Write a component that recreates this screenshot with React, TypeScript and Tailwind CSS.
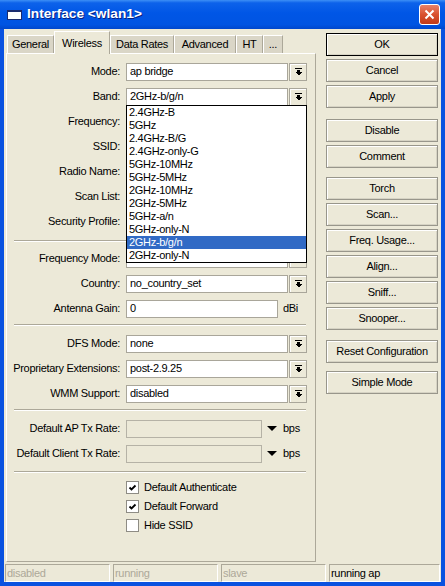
import React from "react";

const BANDS = [
  "2.4GHz-B",
  "5GHz",
  "2.4GHz-B/G",
  "2.4GHz-only-G",
  "5GHz-10MHz",
  "5GHz-5MHz",
  "2GHz-10MHz",
  "2GHz-5MHz",
  "5GHz-a/n",
  "5GHz-only-N",
  "2GHz-b/g/n",
  "2GHz-only-N",
];

const TABS = [
  { label: "General", w: "w-[47px]" },
  { label: "Wireless", w: "w-[56px]", active: true },
  { label: "Data Rates", w: "w-[64px]" },
  { label: "Advanced", w: "w-[62px]" },
  { label: "HT", w: "w-[27px]" },
  { label: "...", w: "w-[20px]" },
];

function DropBtn() {
  return (
    <div className="ml-[1px] flex h-[18px] w-[18px] items-center justify-center border border-[#a9a69a] bg-[#ece9d8] shadow-[inset_1px_1px_0_#fff]">
      <svg width="7" height="8" viewBox="0 0 7 8" shapeRendering="crispEdges">
        <rect x="0" y="0" width="7" height="1" fill="#000" />
        <polygon points="2,2 5,2 5,4 7,4 3.5,7.5 0,4 2,4" fill="#000" />
      </svg>
    </div>
  );
}

function Field({ value = "", className = "w-[162px]", disabled = false }: { value?: string; className?: string; disabled?: boolean }) {
  return (
    <div
      className={`flex h-[18px] items-center border pl-[3px] ${className} ${
        disabled ? "border-[#b5b2a6] bg-[#ece9d8]" : "border-[#a9a69a] bg-white"
      }`}
    >
      {value}
    </div>
  );
}

function Row({ label, children }: { label: string; children?: React.ReactNode }) {
  return (
    <div className="flex h-[25px] items-center">
      <div className="w-[113px] text-right whitespace-nowrap">{label}</div>
      <div className="ml-[6px] flex items-center">{children}</div>
    </div>
  );
}

function Sep({ className }: { className: string }) {
  return <div className={`ml-[7px] w-[292px] border-t border-b border-t-[#aca899] border-b-white ${className}`} />;
}

function Check({ label, checked }: { label: string; checked?: boolean }) {
  return (
    <div className="flex h-[19px] items-center pl-[119px]">
      <div className="flex h-[13px] w-[13px] items-center justify-center border border-[#8e8c84] bg-white">
        {checked && (
          <svg width="9" height="9" viewBox="0 0 9 9">
            <path d="M1.5 4.5 L3.5 6.5 L7.5 2.5" fill="none" stroke="#000" strokeWidth="1.8" />
          </svg>
        )}
      </div>
      <span className="ml-[5px]">{label}</span>
    </div>
  );
}

function Btn({ label, className = "", isDefault = false }: { label: string; className?: string; isDefault?: boolean }) {
  return (
    <div
      className={`flex h-[23px] w-[112px] items-center justify-center border bg-[#ece9d8] shadow-[inset_1px_1px_0_#fff,inset_-1px_-1px_0_#d6d3c4] ${
        isDefault ? "border-black" : "border-[#98968b]"
      } ${className}`}
    >
      {label}
    </div>
  );
}

function Triangle() {
  return (
    <svg width="10" height="6" viewBox="0 0 10 6" className="ml-[5px]">
      <polygon points="0,0 10,0 5,5" fill="#000" />
    </svg>
  );
}

export default function App() {
  return (
    <div className="flex h-[586px] w-[445px] flex-col bg-[#0a52e0] font-[family-name:Liberation_Sans,Arial,sans-serif] text-[11px] tracking-[-0.3px] text-black">
      {/* title bar */}
      <div className="flex h-[29px] shrink-0 items-center bg-[linear-gradient(180deg,#3d8ff6_0%,#0d62ea_10%,#0056e6_45%,#0054e2_85%,#0047cc_100%)] pl-[7px]">
        <div className="h-[10px] w-[15px] border border-t-2 border-[#1a2b6e] bg-white" />
        <span className="ml-[5px] text-[13.7px] font-bold tracking-normal text-white [text-shadow:1px_1px_0_#0a2080]">
          Interface &lt;wlan1&gt;
        </span>
        <div className="ml-auto mr-[5px] flex h-[21px] w-[21px] items-center justify-center rounded-[3px] border border-white bg-[linear-gradient(180deg,#e8826a_0%,#d9512f_50%,#c23a18_100%)]">
          <svg width="11" height="11" viewBox="0 0 11 11">
            <path d="M1.5 1.5 L9.5 9.5 M9.5 1.5 L1.5 9.5" stroke="#fff" strokeWidth="2" />
          </svg>
        </div>
      </div>

      {/* body */}
      <div className="mx-[4px] flex h-[553px] flex-col bg-[#ece9d8]">
        <div className="flex h-[533px]">
          {/* left: tabs + panel */}
          <div className="ml-[2px] flex w-[310px] flex-col">
            <div className="flex h-[24px] items-end pl-[1px]">
              {TABS.map((t) =>
                t.active ? (
                  <div
                    key={t.label}
                    className={`relative z-10 -mb-px flex h-[23px] ${t.w} items-start justify-center border-t border-l border-r border-t-white border-l-white border-r-[#aca899] bg-[#ece9d8] pt-[3px]`}
                  >
                    {t.label}
                  </div>
                ) : (
                  <div
                    key={t.label}
                    className={`flex h-[18px] ${t.w} items-center justify-center border-t border-l border-r border-t-white border-l-white border-r-[#aca899] bg-[#dad6c7]`}
                  >
                    {t.label}
                  </div>
                )
              )}
            </div>
            <div className="flex h-[509px] flex-col border border-t-white border-l-white border-r-[#aca899] border-b-[#aca899] pt-[5px]">
              <Row label="Mode:">
                <Field value="ap bridge" />
                <DropBtn />
              </Row>
              <Row label="Band:">
                <div className="relative flex items-center">
                  <Field value="2GHz-b/g/n" />
                  <DropBtn />
                  <div className="absolute top-[17px] left-0 z-20 flex w-[181px] flex-col border border-black bg-white">
                    {BANDS.map((b) => (
                      <div
                        key={b}
                        className={`flex h-[13px] items-center pl-[2px] ${b === "2GHz-b/g/n" ? "bg-[#316ac5] text-white" : ""}`}
                      >
                        {b}
                      </div>
                    ))}
                  </div>
                </div>
              </Row>
              <Row label="Frequency:">
                <Field />
                <DropBtn />
              </Row>
              <Row label="SSID:">
                <Field className="w-[181px]" />
              </Row>
              <Row label="Radio Name:">
                <Field className="w-[181px]" />
              </Row>
              <Row label="Scan List:">
                <Field />
                <DropBtn />
              </Row>
              <Row label="Security Profile:">
                <Field />
                <DropBtn />
              </Row>

              <Sep className="mt-[6px] mb-[4px]" />

              <Row label="Frequency Mode:">
                <Field />
                <DropBtn />
              </Row>
              <Row label="Country:">
                <Field value="no_country_set" />
                <DropBtn />
              </Row>
              <Row label="Antenna Gain:">
                <Field value="0" className="w-[152px]" />
                <span className="ml-[5px]">dBi</span>
              </Row>

              <Sep className="mt-[3px] mb-[5px]" />

              <Row label="DFS Mode:">
                <Field value="none" />
                <DropBtn />
              </Row>
              <Row label="Proprietary Extensions:">
                <Field value="post-2.9.25" />
                <DropBtn />
              </Row>
              <Row label="WMM Support:">
                <Field value="disabled" />
                <DropBtn />
              </Row>

              <Sep className="mt-[3px] mb-[5px]" />

              <Row label="Default AP Tx Rate:">
                <Field disabled className="w-[136px]" />
                <Triangle />
                <span className="ml-[6px]">bps</span>
              </Row>
              <Row label="Default Client Tx Rate:">
                <Field disabled className="w-[136px]" />
                <Triangle />
                <span className="ml-[6px]">bps</span>
              </Row>

              <Sep className="mt-[5px] mb-[5px]" />

              <Check label="Default Authenticate" checked />
              <Check label="Default Forward" checked />
              <Check label="Hide SSID" />
            </div>
          </div>

          {/* right: buttons */}
          <div className="ml-[10px] flex flex-col gap-[3px] pt-[4px]">
            <Btn label="OK" isDefault />
            <Btn label="Cancel" />
            <Btn label="Apply" />
            <Btn label="Disable" className="mt-[8px]" />
            <Btn label="Comment" />
            <Btn label="Torch" className="mt-[6px]" />
            <Btn label="Scan..." />
            <Btn label="Freq. Usage..." />
            <Btn label="Align..." />
            <Btn label="Sniff..." />
            <Btn label="Snooper..." />
            <Btn label="Reset Configuration" className="mt-[7px]" />
            <Btn label="Simple Mode" className="mt-[5px]" />
          </div>
        </div>

        {/* status bar */}
        <div className="mt-[2px] flex h-[18px] gap-[3px] pl-[1px]">
          {["disabled", "running", "slave"].map((s) => (
            <div
              key={s}
              className="flex w-[105px] items-center border border-t-[#aca899] border-l-[#aca899] border-r-white border-b-white pl-[1px] text-[#aca899]"
            >
              {s}
            </div>
          ))}
          <div className="flex w-[111px] items-center border border-t-[#aca899] border-l-[#aca899] border-r-white border-b-white pl-[1px]">
            running ap
          </div>
        </div>
      </div>
    </div>
  );
}
